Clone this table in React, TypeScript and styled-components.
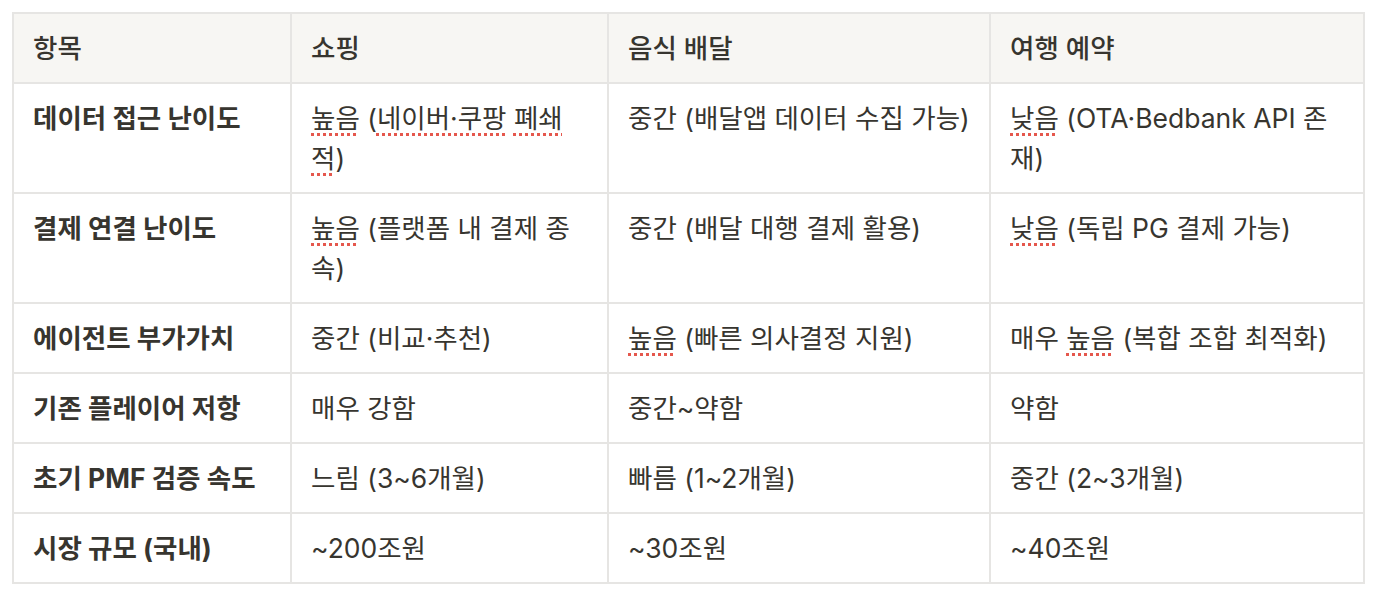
import React from "react";
import styled, { createGlobalStyle } from "styled-components";

const GlobalStyle = createGlobalStyle`
  html, body { margin: 0; padding: 0; background: #ffffff; }
  body {
    font-family: "Inter", "Noto Sans CJK KR", sans-serif;
    color: #37352f;
  }
`;

const Page = styled.div`
  padding: 12px;
`;

const Table = styled.table`
  width: 1351px;
  border-collapse: collapse;
  table-layout: fixed;
  font-size: 26.5px;
  line-height: 40px;
  border: 2px solid #e6e5e3;
`;

const Col = styled.col<{ $w: number }>`
  width: ${(p) => p.$w}px;
`;

const HeadCell = styled.th`
  background: #f7f6f3;
  border: 2px solid #e6e5e3;
  padding: 14px 19px;
  text-align: left;
  font-weight: 500;
  vertical-align: top;
`;

const Cell = styled.td<{ $strong?: boolean }>`
  border: 2px solid #e6e5e3;
  padding: 14px 19px;
  vertical-align: top;
  font-weight: ${(p) => (p.$strong ? 700 : 400)};
`;

const Typo = styled.span`
  text-decoration-line: underline;
  text-decoration-style: dotted;
  text-decoration-color: #e5574d;
  text-decoration-thickness: 3px;
  text-underline-offset: 5px;
`;

type Row = { label: string; cells: React.ReactNode[] };

const rows: Row[] = [
  {
    label: "데이터 접근 난이도",
    cells: [
      <>
        <Typo>높음</Typo> (<Typo>네이버·쿠팡</Typo> <Typo>폐쇄적</Typo>)
      </>,
      "중간 (배달앱 데이터 수집 가능)",
      <>
        <Typo>낮음</Typo> (OTA·Bedbank API 존재)
      </>,
    ],
  },
  {
    label: "결제 연결 난이도",
    cells: [
      <>
        <Typo>높음</Typo> (플랫폼 내 결제 종속)
      </>,
      "중간 (배달 대행 결제 활용)",
      <>
        <Typo>낮음</Typo> (독립 PG 결제 가능)
      </>,
    ],
  },
  {
    label: "에이전트 부가가치",
    cells: [
      "중간 (비교·추천)",
      <>
        <Typo>높음</Typo> (빠른 의사결정 지원)
      </>,
      <>
        매우 <Typo>높음</Typo> (복합 조합 최적화)
      </>,
    ],
  },
  { label: "기존 플레이어 저항", cells: ["매우 강함", "중간~약함", "약함"] },
  {
    label: "초기 PMF 검증 속도",
    cells: ["느림 (3~6개월)", "빠름 (1~2개월)", "중간 (2~3개월)"],
  },
  { label: "시장 규모 (국내)", cells: ["~200조원", "~30조원", "~40조원"] },
];

export default function App() {
  return (
    <>
      <GlobalStyle />
      <Page>
        <Table>
          <colgroup>
            <Col $w={278} />
            <Col $w={317} />
            <Col $w={382} />
            <Col $w={374} />
          </colgroup>
          <thead>
            <tr>
              <HeadCell>항목</HeadCell>
              <HeadCell>쇼핑</HeadCell>
              <HeadCell>음식 배달</HeadCell>
              <HeadCell>여행 예약</HeadCell>
            </tr>
          </thead>
          <tbody>
            {rows.map((r) => (
              <tr key={r.label}>
                <Cell $strong>{r.label}</Cell>
                {r.cells.map((c, i) => (
                  <Cell key={i}>{c}</Cell>
                ))}
              </tr>
            ))}
          </tbody>
        </Table>
      </Page>
    </>
  );
}
